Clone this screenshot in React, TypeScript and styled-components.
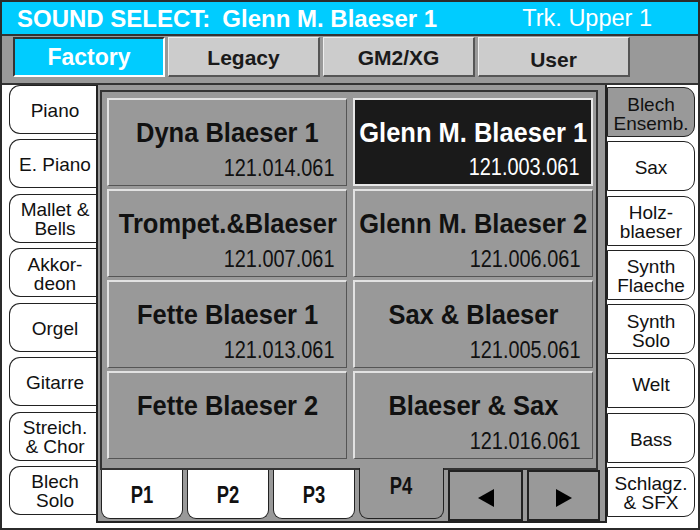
import React from 'react';
import styled, { createGlobalStyle, css } from 'styled-components';

const GlobalStyle = createGlobalStyle`
  html, body { margin: 0; padding: 0; background: #ffffff; }
  body { font-family: "Liberation Sans", Arial, sans-serif; }
  *, *::before, *::after { box-sizing: border-box; }
`;

const Screen = styled.div`
  width: 700px;
  height: 530px;
  border: 2px solid #2b2b2b;
  background: #ffffff;
  display: flex;
  flex-direction: column;
  overflow: hidden;
`;

const Header = styled.header`
  flex: none;
  height: 34px;
  background: #00ccff;
  border-bottom: 2px solid #333333;
  display: flex;
  align-items: center;
  padding: 2px 46px 0 15px;
  color: #ffffff;
  white-space: nowrap;
  line-height: 1;
`;

const HeaderLabel = styled.span<{ $gap?: number }>`
  font-size: 24px;
  font-weight: 700;
  margin-left: ${(p) => p.$gap ?? 0}px;
`;

const TrackLabel = styled.span`
  margin-left: auto;
  font-size: 23.5px;
  font-weight: 400;
`;

const TabBand = styled.nav`
  flex: none;
  height: 49px;
  background: #999999;
  border-bottom: 2px solid #333333;
  display: flex;
  align-items: flex-start;
  gap: 3px;
  padding: 1px 0 0 11px;
`;

const BankTab = styled.div<{ $active?: boolean; $dy?: number }>`
  width: 152px;
  height: 40px;
  display: flex;
  align-items: center;
  justify-content: center;
  padding-top: ${(p) => p.$dy ?? 1}px;
  background: #cccccc;
  border-top: 1px solid #eeeeee;
  border-left: 1px solid #eeeeee;
  border-right: 2px solid #555555;
  border-bottom: 2px solid #555555;
  color: #1a1a1a;
  font-size: 21px;
  font-weight: 700;
  ${(p) =>
    p.$active &&
    css`
      background: #00ccff;
      color: #ffffff;
      font-size: 23px;
      border-top: 2px solid #333333;
      border-left: 2px solid #333333;
      border-right: 2px solid #ffffff;
      border-bottom: 2px solid #ffffff;
    `}
`;

const Body = styled.main`
  flex: 1;
  display: grid;
  grid-template-columns: 94px 511px 91px;
  min-height: 0;
`;

const SideColumn = styled.div<{ $side: 'left' | 'right' }>`
  display: flex;
  flex-direction: column;
  justify-content: space-between;
  ${(p) =>
    p.$side === 'left'
      ? css`
          padding: 0 0 13px 7px;
        `
      : css`
          padding: 2px 3px 11px 0;
        `}
`;

const SideButton = styled.div<{ $side: 'left' | 'right'; $active?: boolean }>`
  display: flex;
  align-items: center;
  justify-content: center;
  text-align: center;
  white-space: pre-line;
  font-size: 19px;
  line-height: 19px;
  color: #111111;
  background: ${(p) => (p.$active ? '#999999' : '#ffffff')};
  border: 1.5px solid #222222;
  ${(p) =>
    p.$side === 'left'
      ? css`
          height: 49px;
          border-right: none;
          border-radius: 11px 0 0 11px;
          padding: 2px 0 0 4px;
        `
      : css`
          height: 50px;
          border-radius: 0 11px 11px 0;
          padding-top: 3px;
        `}
`;

const CenterPanel = styled.section`
  background: #999999;
  border-left: 2px solid #222222;
  border-right: 2px solid #222222;
  border-bottom: 2px solid #222222;
  margin-bottom: 5px;
  padding: 5px 7px 0 2px;
  display: flex;
  flex-direction: column;
`;

const SoundGrid = styled.div`
  border: 2px solid #333333;
  padding: 6px 3px 9px 5px;
  display: grid;
  grid-template-columns: 240px 240px;
  grid-auto-rows: 88px;
  column-gap: 6px;
  row-gap: 3px;
`;

const SoundCell = styled.div<{ $selected?: boolean }>`
  display: flex;
  flex-direction: column;
  background: #999999;
  border-top: 2px solid #e2e2e2;
  border-left: 2px solid #e2e2e2;
  border-right: 1.5px solid #555555;
  border-bottom: 1.5px solid #555555;
  color: #111111;
  ${(p) =>
    p.$selected &&
    css`
      background: #1a1a1a;
      color: #ffffff;
      border: 2px solid #e8e8e8;
    `}
`;

const SoundName = styled.div`
  margin-top: 19px;
  height: 28px;
  display: flex;
  justify-content: center;
  white-space: nowrap;
  & > span {
    display: inline-block;
    font-size: 28px;
    line-height: 28px;
    font-weight: 700;
    transform: scaleX(0.91);
    transform-origin: center;
  }
`;

const SoundNumber = styled.div`
  margin-top: auto;
  margin-bottom: 6px;
  height: 22px;
  padding-right: 12px;
  display: flex;
  justify-content: flex-end;
  white-space: nowrap;
  & > span {
    display: inline-block;
    font-size: 24px;
    line-height: 22px;
    font-weight: 400;
    transform: scaleX(0.83);
    transform-origin: right center;
  }
`;

const PageBar = styled.div`
  height: 51px;
  margin-left: 1px;
  display: grid;
  grid-template-columns: 82px 82px 82px 85px 75px 73px;
  column-gap: 4px;
  align-items: start;
`;

const PageTab = styled.div<{ $active?: boolean }>`
  height: 49px;
  display: flex;
  align-items: center;
  justify-content: center;
  background: #ffffff;
  border: 1.5px solid #222222;
  border-top: none;
  border-radius: 0 0 9px 9px;
  padding-top: 2px;
  color: #111111;
  & > span {
    display: inline-block;
    font-size: 23px;
    font-weight: 700;
    transform: scaleX(0.8);
  }
  ${(p) =>
    p.$active &&
    css`
      background: #999999;
      margin-top: -2px;
      height: 51px;
      padding-top: 0;
      padding-bottom: 14px;
    `}
`;

const ArrowButton = styled.div`
  height: 51px;
  display: flex;
  align-items: center;
  justify-content: center;
  background: #999999;
  border: 2px solid #222222;
  padding-top: 4px;
`;

const sounds = [
  { name: 'Dyna Blaeser 1', num: '121.014.061' },
  { name: 'Glenn M. Blaeser 1', num: '121.003.061', selected: true },
  { name: 'Trompet.&Blaeser', num: '121.007.061' },
  { name: 'Glenn M. Blaeser 2', num: '121.006.061' },
  { name: 'Fette Blaeser 1', num: '121.013.061' },
  { name: 'Sax & Blaeser', num: '121.005.061' },
  { name: 'Fette Blaeser 2', num: '' },
  { name: 'Blaeser & Sax', num: '121.016.061' },
];

const leftCats = ['Piano', 'E. Piano', 'Mallet &\nBells', 'Akkor-\ndeon', 'Orgel', 'Gitarre', 'Streich.\n& Chor', 'Blech\nSolo'];
const rightCats = ['Blech\nEnsemb.', 'Sax', 'Holz-\nblaeser', 'Synth\nFlaeche', 'Synth\nSolo', 'Welt', 'Bass', 'Schlagz.\n& SFX'];

const Triangle = ({ dir }: { dir: 'left' | 'right' }) => (
  <svg width="16" height="18" viewBox="0 0 16 18">
    <polygon points={dir === 'left' ? '16,0 16,18 0,9' : '0,0 0,18 16,9'} fill="#000000" />
  </svg>
);

export default function App() {
  return (
    <>
      <GlobalStyle />
      <Screen>
        <Header>
          <HeaderLabel>SOUND SELECT:</HeaderLabel>
          <HeaderLabel $gap={12}>Glenn M. Blaeser 1</HeaderLabel>
          <TrackLabel>Trk. Upper 1</TrackLabel>
        </Header>
        <TabBand>
          <BankTab $active>Factory</BankTab>
          <BankTab $dy={2}>Legacy</BankTab>
          <BankTab $dy={3}>GM2/XG</BankTab>
          <BankTab $dy={6}>User</BankTab>
        </TabBand>
        <Body>
          <SideColumn $side="left">
            {leftCats.map((c) => (
              <SideButton key={c} $side="left">
                {c}
              </SideButton>
            ))}
          </SideColumn>
          <CenterPanel>
            <SoundGrid>
              {sounds.map((s) => (
                <SoundCell key={s.name} $selected={s.selected}>
                  <SoundName>
                    <span>{s.name}</span>
                  </SoundName>
                  {s.num && (
                    <SoundNumber>
                      <span>{s.num}</span>
                    </SoundNumber>
                  )}
                </SoundCell>
              ))}
            </SoundGrid>
            <PageBar>
              <PageTab><span>P1</span></PageTab>
              <PageTab><span>P2</span></PageTab>
              <PageTab><span>P3</span></PageTab>
              <PageTab $active><span>P4</span></PageTab>
              <ArrowButton><Triangle dir="left" /></ArrowButton>
              <ArrowButton><Triangle dir="right" /></ArrowButton>
            </PageBar>
          </CenterPanel>
          <SideColumn $side="right">
            {rightCats.map((c, i) => (
              <SideButton key={c} $side="right" $active={i === 0}>
                {c}
              </SideButton>
            ))}
          </SideColumn>
        </Body>
      </Screen>
    </>
  );
}
